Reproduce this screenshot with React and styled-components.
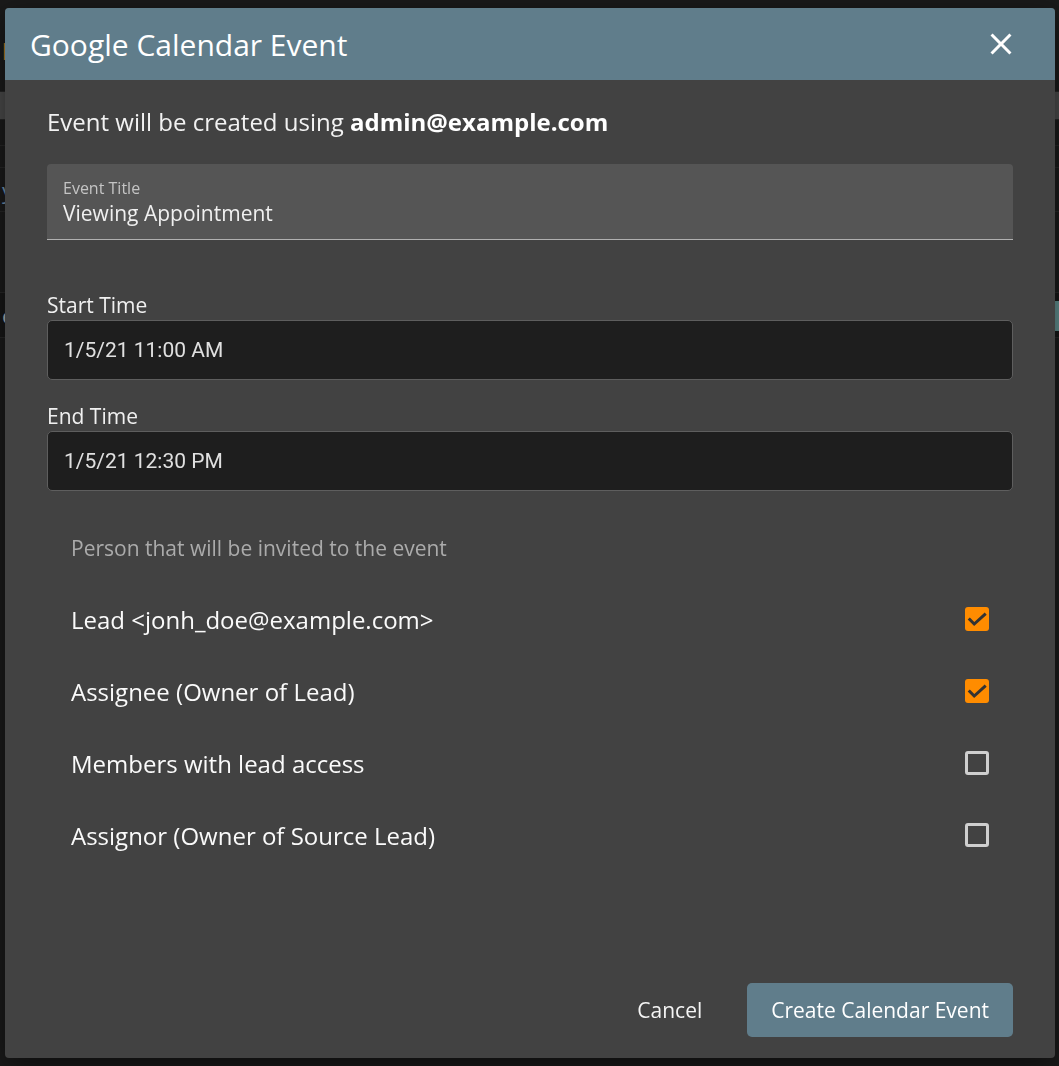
import React, { useState } from 'react';
import styled, { createGlobalStyle } from 'styled-components';

const GlobalStyle = createGlobalStyle`
  html, body {
    margin: 0;
    padding: 0;
    background: #1e1e1e;
    font-family: "Open Sans", "Liberation Sans", sans-serif;
  }
  * { box-sizing: border-box; }
`;

// the page underneath the dialog, only its edges show
const Page = styled.div`
  width: 1059px;
  height: 1066px;
  background: #1e1e1e;
  overflow: hidden;
`;

const PageRows = styled.div`
  display: flex;
  flex-direction: column;
`;

const PageRow = styled.div`
  height: ${(p) => p.$h}px;
  background: ${(p) => p.$bg || 'transparent'};
  border-bottom: 1px solid #2c2c2c;
  color: ${(p) => p.$color || '#bbb'};
  font-size: 22px;
  line-height: ${(p) => p.$h}px;
  padding-left: 2px;
  display: flex;
  justify-content: space-between;
`;

const PageChip = styled.span`
  background: #6fa3a3;
  color: #1c2a6b;
  height: 30px;
  line-height: 30px;
  margin-top: 8px;
  padding: 0 4px;
  font-size: 20px;
`;

const Overlay = styled.div`
  position: fixed;
  inset: 0;
  background: rgba(0, 0, 0, 0.12);
`;

const Dialog = styled.div`
  position: absolute;
  left: 5px;
  top: 8px;
  width: 1050px;
  height: 1050px;
  background: #424242;
  border-radius: 4px;
  overflow: hidden;
  display: flex;
  flex-direction: column;
  box-shadow: 0 8px 30px rgba(0, 0, 0, 0.5);
`;

const Header = styled.div`
  height: 72px;
  flex-shrink: 0;
  background: #607d8b;
  display: flex;
  align-items: center;
  justify-content: space-between;
  padding: 0 36px 0 25px;
`;

const Title = styled.h2`
  margin: 0;
  font-size: 30px;
  font-weight: 400;
  color: #fff;
`;

const CloseButton = styled.button`
  background: none;
  border: none;
  padding: 0;
  width: 36px;
  height: 36px;
  display: flex;
  align-items: center;
  justify-content: center;
  cursor: pointer;
  color: #fff;
`;

const Body = styled.div`
  flex: 1;
  display: flex;
  flex-direction: column;
  padding: 27px 42px 21px;
`;

const Intro = styled.p`
  margin: 0;
  font-size: 24px;
  line-height: 30px;
  color: #f2f2f2;
  strong { font-weight: 700; color: #fff; }
`;

const FilledField = styled.div`
  margin-top: 27px;
  height: 76px;
  background: #555555;
  border-radius: 4px 4px 0 0;
  border-bottom: 1px solid #b0b0b0;
  padding: 13px 16px 0;
  display: flex;
  flex-direction: column;
`;

const FilledLabel = styled.label`
  font-size: 16px;
  line-height: 22px;
  color: #c4c4c4;
`;

const FilledValue = styled.div`
  font-size: 21px;
  line-height: 28px;
  color: #f0f0f0;
`;

const FieldLabel = styled.label`
  display: block;
  margin-top: ${(p) => p.$top}px;
  margin-bottom: 2px;
  font-size: 21px;
  line-height: 26px;
  color: #f0f0f0;
`;

const TimeInput = styled.div`
  height: 60px;
  background: #1e1e1e;
  border: 1px solid #5e5e5e;
  border-radius: 5px;
  padding: 0 16px;
  display: flex;
  align-items: center;
  font-family: Roboto, "Liberation Sans", sans-serif;
  font-size: 21px;
  color: #e0e0e0;
`;

const Caption = styled.div`
  margin-top: 44px;
  padding: 0 24px;
  font-size: 21px;
  line-height: 26px;
  color: #ababab;
`;

const InviteList = styled.div`
  margin-top: 22px;
  display: flex;
  flex-direction: column;
`;

const InviteRow = styled.label`
  height: 72px;
  padding: 0 24px;
  display: flex;
  align-items: center;
  justify-content: space-between;
  font-size: 24px;
  color: #fafafa;
  cursor: pointer;
`;

const Box = styled.span`
  width: 24px;
  height: 24px;
  border-radius: 3px;
  display: flex;
  align-items: center;
  justify-content: center;
  background: ${(p) => (p.$checked ? '#ff8c00' : 'transparent')};
  border: ${(p) => (p.$checked ? 'none' : '3px solid #cfcfcf')};
`;

const Footer = styled.div`
  margin-top: auto;
  display: flex;
  justify-content: flex-end;
  align-items: center;
  gap: 29px;
`;

const TextButton = styled.button`
  background: none;
  border: none;
  font-family: inherit;
  font-size: 21px;
  color: #f5f5f5;
  padding: 0 16px;
  height: 54px;
  cursor: pointer;
`;

const PrimaryButton = styled.button`
  background: #607d8b;
  border: none;
  border-radius: 5px;
  font-family: inherit;
  font-size: 21px;
  color: #fff;
  height: 54px;
  padding: 0 24px;
  cursor: pointer;
`;

const CloseIcon = () => (
  <svg width="36" height="36" viewBox="0 0 24 24" fill="currentColor">
    <path d="M19 6.41L17.59 5 12 10.59 6.41 5 5 6.41 10.59 12 5 17.59 6.41 19 12 13.41 17.59 19 19 17.59 13.41 12z" />
  </svg>
);

const Check = () => (
  <svg width="24" height="24" viewBox="0 0 24 24" fill="none">
    <polyline points="4.8,12.6 9.2,17 19.6,7.6" stroke="#333" strokeWidth="3" strokeLinecap="square" />
  </svg>
);

const invitees = [
  { id: 'lead', text: 'Lead <jonh_doe@example.com>', on: true },
  { id: 'assignee', text: 'Assignee (Owner of Lead)', on: true },
  { id: 'members', text: 'Members with lead access', on: false },
  { id: 'assignor', text: 'Assignor (Owner of Source Lead)', on: false },
];

export default function App() {
  const [checked, setChecked] = useState(
    Object.fromEntries(invitees.map((i) => [i.id, i.on]))
  );

  const toggle = (id) => setChecked((c) => ({ ...c, [id]: !c[id] }));

  return (
    <>
      <GlobalStyle />
      <Page>
        <PageRows>
          <PageRow $h={92} $color="#e58a2c">p</PageRow>
          <PageRow $h={28} $bg="#555" />
          <PageRow $h={26} />
          <PageRow $h={22} />
          <PageRow $h={44} $color="#7fa6c9">y</PageRow>
          <PageRow $h={81} />
          <PageRow $h={45} $bg="#1a1a1a" $color="#ccc">
            e<PageChip>n</PageChip>
          </PageRow>
        </PageRows>
      </Page>
      <Overlay>
        <Dialog role="dialog" aria-label="Google Calendar Event">
          <Header>
            <Title>Google Calendar Event</Title>
            <CloseButton aria-label="Close">
              <CloseIcon />
            </CloseButton>
          </Header>
          <Body>
            <Intro>
              Event will be created using <strong>admin@example.com</strong>
            </Intro>

            <FilledField>
              <FilledLabel>Event Title</FilledLabel>
              <FilledValue>Viewing Appointment</FilledValue>
            </FilledField>

            <FieldLabel $top={52}>Start Time</FieldLabel>
            <TimeInput>1/5/21 11:00 AM</TimeInput>

            <FieldLabel $top={23}>End Time</FieldLabel>
            <TimeInput>1/5/21 12:30 PM</TimeInput>

            <Caption>Person that will be invited to the event</Caption>
            <InviteList>
              {invitees.map((i) => (
                <InviteRow key={i.id} onClick={() => toggle(i.id)}>
                  {i.text}
                  <Box $checked={checked[i.id]}>{checked[i.id] && <Check />}</Box>
                </InviteRow>
              ))}
            </InviteList>

            <Footer>
              <TextButton>Cancel</TextButton>
              <PrimaryButton>Create Calendar Event</PrimaryButton>
            </Footer>
          </Body>
        </Dialog>
      </Overlay>
    </>
  );
}
